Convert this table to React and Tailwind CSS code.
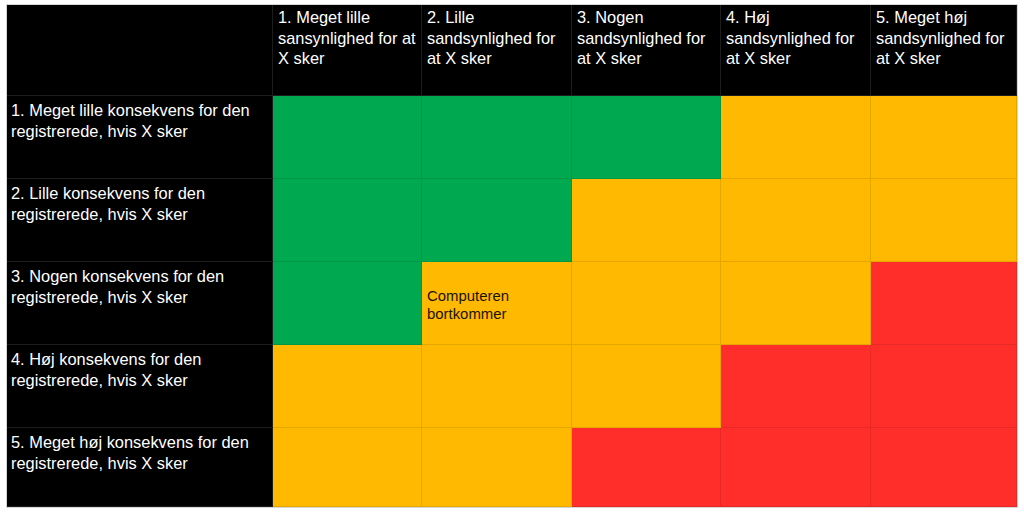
import React from "react";

const G = "bg-[#00a94f]";
const Y = "bg-[#ffb900]";
const R = "bg-[#ff2e2b]";

const headers = [
  "1. Meget lille sansynlighed for at X sker",
  "2. Lille sandsynlighed for at X sker",
  "3. Nogen sandsynlighed for at X sker",
  "4. Høj sandsynlighed for at X sker",
  "5. Meget høj sandsynlighed for at X sker",
];

const rows = [
  { label: "1. Meget lille konsekvens for den registrerede, hvis X sker", cells: [G, G, G, Y, Y] },
  { label: "2. Lille konsekvens for den registrerede, hvis X sker", cells: [G, G, Y, Y, Y] },
  { label: "3. Nogen konsekvens for den registrerede, hvis X sker", cells: [G, Y, Y, Y, R] },
  { label: "4. Høj konsekvens for den registrerede, hvis X sker", cells: [Y, Y, Y, R, R] },
  { label: "5. Meget høj konsekvens for den registrerede, hvis X sker", cells: [Y, Y, R, R, R] },
];

export default function App() {
  return (
    <div
      className="w-[1024px] h-[512px] bg-white pl-[6px] pt-[4px] overflow-hidden"
      style={{ fontFamily: '"Liberation Sans", Arial, sans-serif' }}
    >
      <div className="w-[1012px] border border-[#d6d6d6] bg-black">
        <div className="grid grid-cols-[266px_149px_150px_149px_150px_146px] grid-rows-[91px_83px_83px_83px_83px_79px]">
          <div className="bg-black border-r border-b border-[#1d1d1d]" />
          {headers.map((h, i) => (
            <div
              key={i}
              className="bg-black border-r border-b border-[#1d1d1d] text-white text-[16.4px] leading-[20.5px] pl-[5px] pr-[2px] pt-[2px]"
            >
              {h}
            </div>
          ))}
          {rows.map((row, ri) => (
            <React.Fragment key={ri}>
              <div className="bg-black border-r border-b border-[#1d1d1d] text-white text-[16.4px] leading-[20.5px] pl-[4px] pr-[2px] pt-[4px]">
                {row.label}
              </div>
              {row.cells.map((c, ci) => (
                <div
                  key={ci}
                  className={`${c} border-r border-b border-black/10 flex items-center pl-[5px]`}
                >
                  {ri === 2 && ci === 1 ? (
                    <span className="text-[#1a1300] text-[14.9px] leading-[18px] pt-[3px]">
                      Computeren
                      <br />
                      bortkommer
                    </span>
                  ) : null}
                </div>
              ))}
            </React.Fragment>
          ))}
        </div>
      </div>
    </div>
  );
}
